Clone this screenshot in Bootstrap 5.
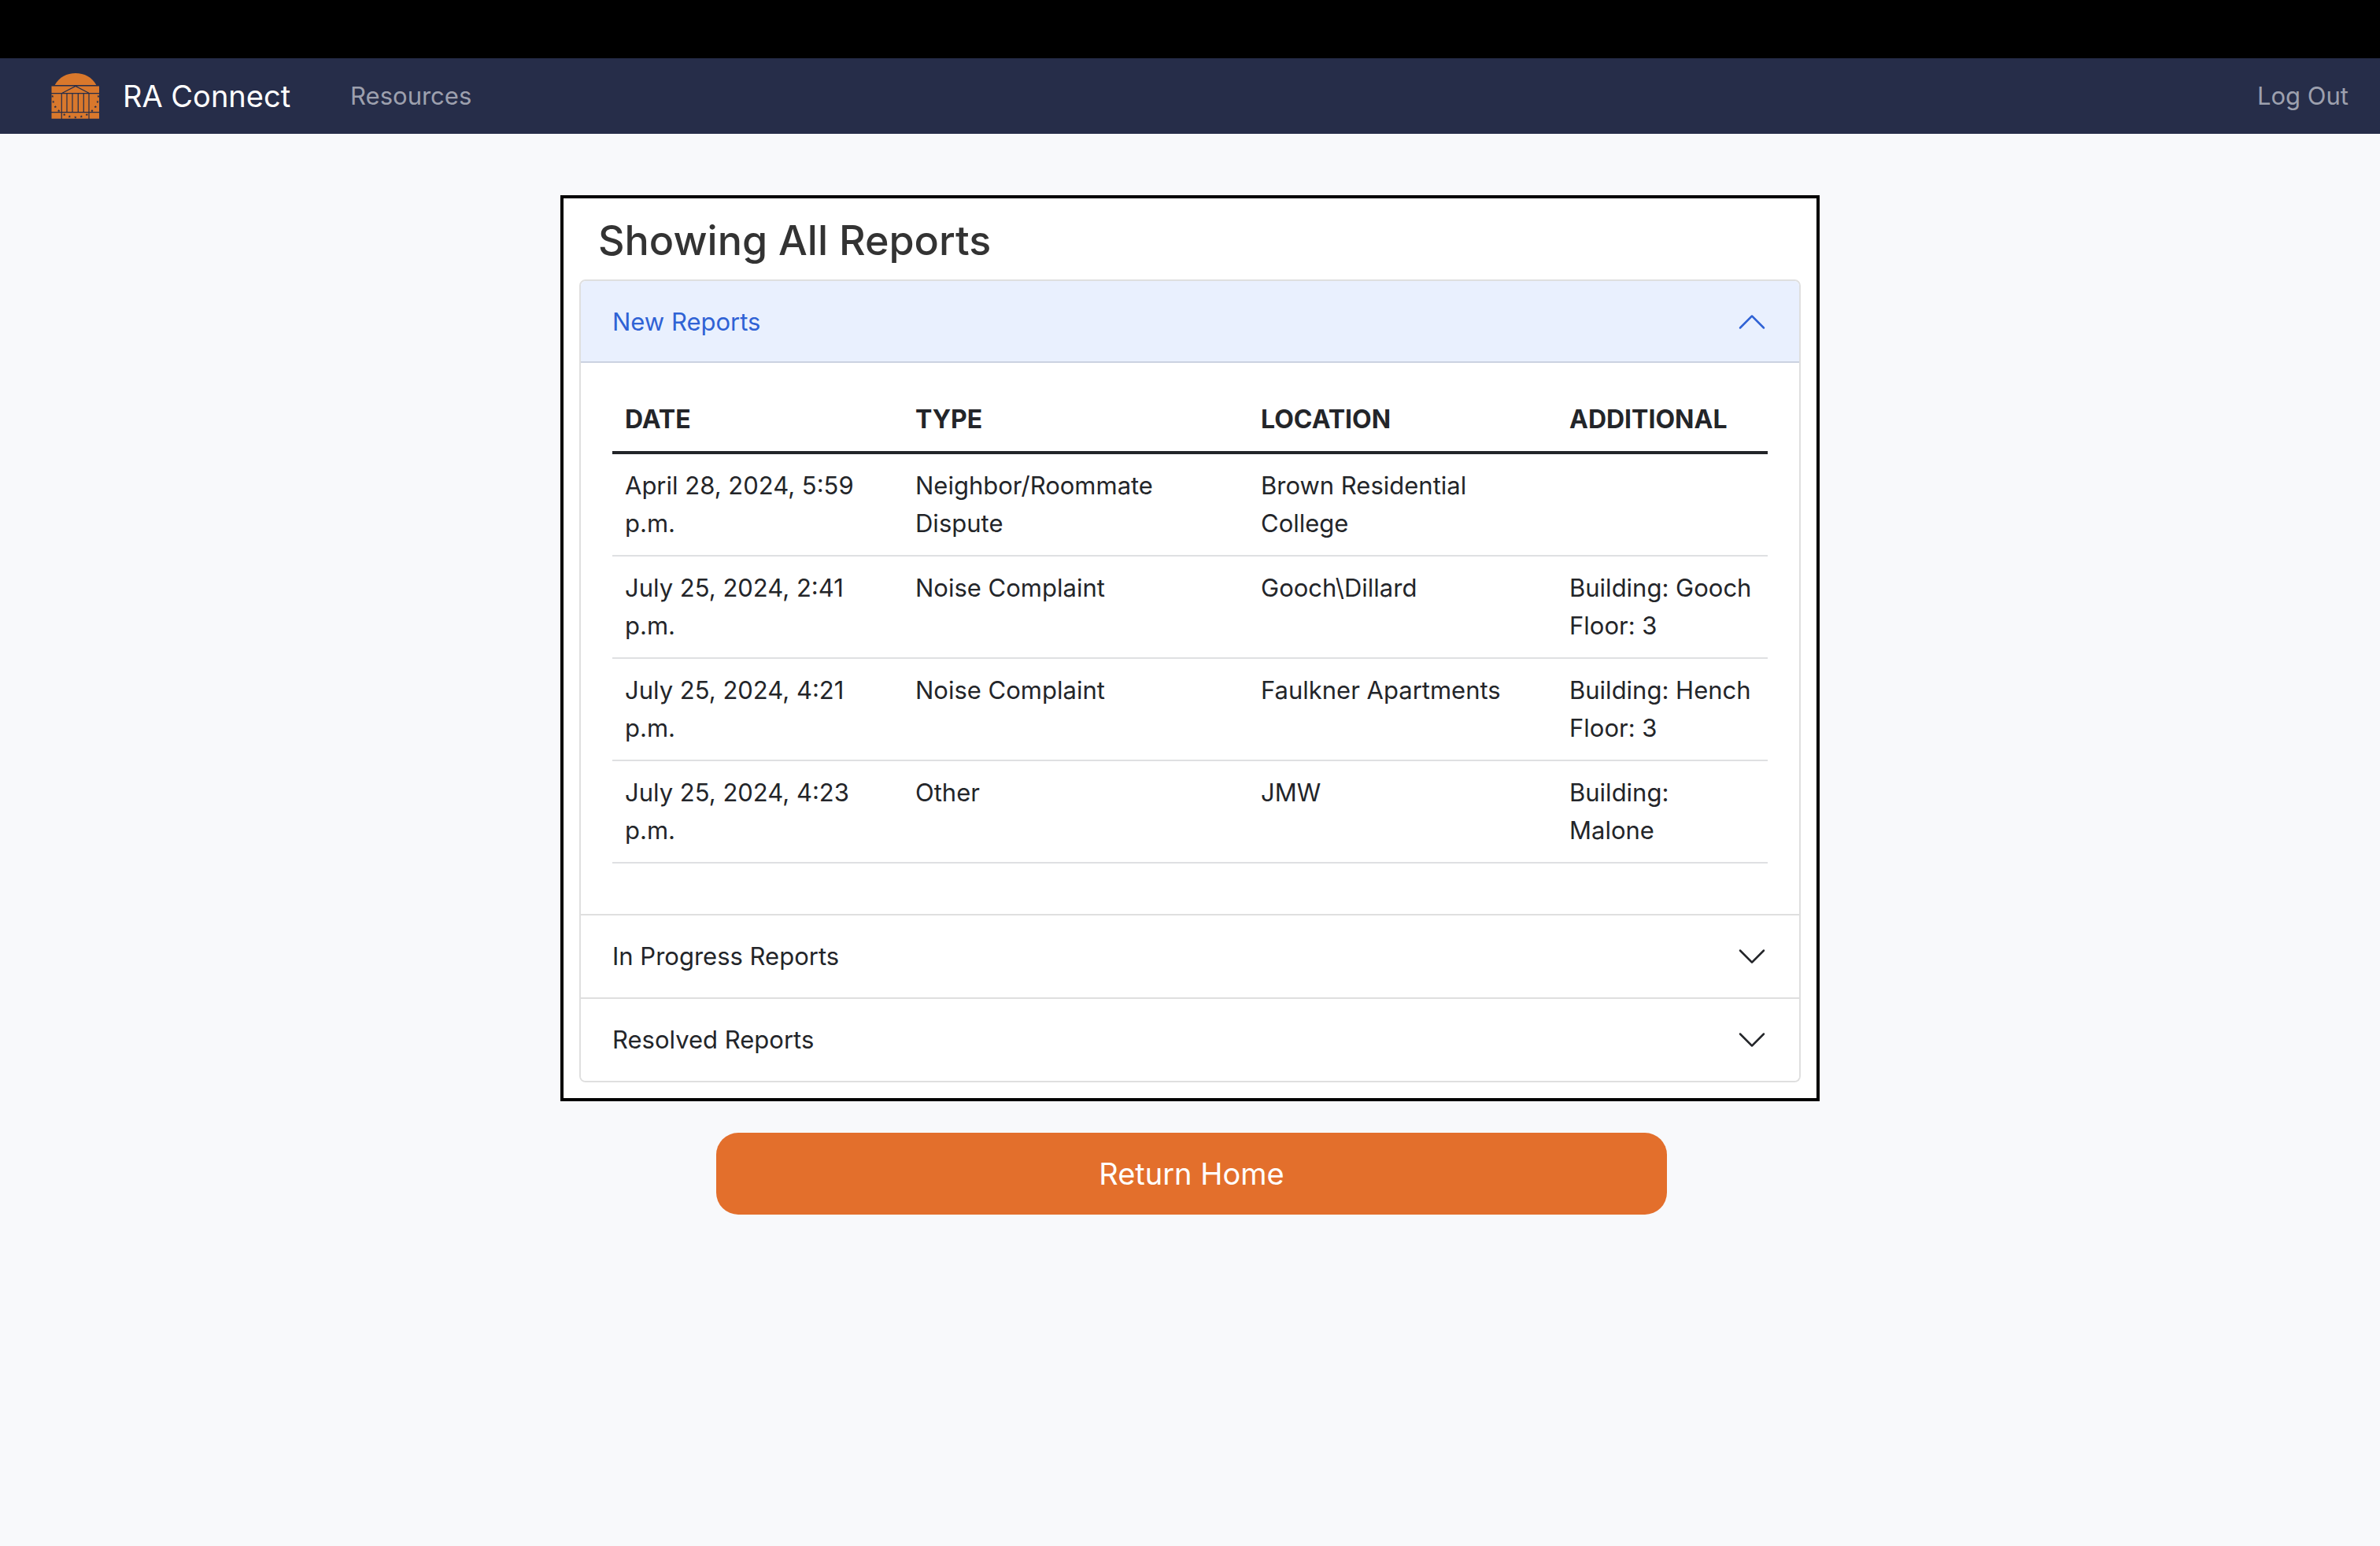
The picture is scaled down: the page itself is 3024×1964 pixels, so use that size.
<!DOCTYPE html>
<html lang="en">
<head>
<meta charset="utf-8">
<meta name="viewport" content="width=device-width, initial-scale=1">
<title>RA Connect</title>
<link href="https://cdn.jsdelivr.net/npm/bootstrap@5.3.0/dist/css/bootstrap.min.css" rel="stylesheet">
<style>
  html { font-size: 32px; }
  body {
    font-family: Inter, "Liberation Sans", sans-serif;
    font-size: 31px;
    line-height: 48px;
    color: #232529;
    background: #f8f9fb;
  }
  .top-strip { height: 74px; }
  .site-nav { background: #262d49; padding: 8px 24px 8px 64px; }
  .site-nav .navbar-brand { font-size: 38px; line-height: 60px; margin-right: 60px; }
  .site-nav .brand-logo { width: 64px; height: 60px; margin-right: 28px; }
  .site-nav .nav-link { color: #9da0ae; padding-left: 16px; padding-right: 16px; }

  .report-panel { width: 1600px; max-width: 100%; margin-top: 78px; padding: 20px; border: 4px solid #000; }
  .report-panel h1 { font-size: 52px; line-height: 67px; color: #333; padding-left: 24px; margin-bottom: 16px; }

  .report-list {
    --bs-accordion-border-width: 2px;
    --bs-accordion-border-color: #dfdfdf;
    --bs-accordion-border-radius: 8px;
    --bs-accordion-inner-border-radius: 6px;
    --bs-accordion-btn-color: #232529;
    --bs-accordion-btn-padding-x: 40px;
    --bs-accordion-body-padding-x: 40px;
    --bs-accordion-active-bg: #e9f0fe;
    --bs-accordion-active-color: #2f62d5;
    --bs-accordion-bg: #fff;
  }
  .report-list .accordion-button { font-size: 31px; line-height: 40px; }
  .report-list .accordion-button::after { display: none; }
  .report-list .accordion-button:not(.collapsed) { box-shadow: inset 0 -2px 0 #cbd2e1; }
  .chevron { width: 40px; height: 40px; }
  .accordion-button:not(.collapsed) .chevron { transform: rotate(180deg); }

  .report-table { --bs-table-color: #232529; --bs-table-bg: transparent; margin-bottom: 32px; border-collapse: separate; border-spacing: 0; }
  .report-table > :not(caption) > * > * { padding: 16px; border-bottom: 2px solid #dfe0e2; }
  .report-table > thead > tr > th { font-size: 32px; border-bottom: 4px solid #232529; }
  .col-date { width: 369px; }
  .col-type { width: 439px; }
  .col-location { width: 392px; }

  .home-row { padding-left: 4px; margin-top: 40px; }
  .btn-home, .btn-home:hover {
    width: 40%;
    padding: 22px;
    font-size: 38px;
    line-height: 60px;
    color: #fff;
    background: #e36f2c;
    border: 0;
    border-radius: 28px;
  }
</style>
</head>
<body>
<div class="top-strip bg-black"></div>
<nav class="navbar navbar-expand site-nav">
  <a class="navbar-brand d-flex align-items-center text-white" href="#">
    <svg class="brand-logo" viewBox="0 0 64 60" aria-hidden="true">
      <g fill="#d9782c">
        <path d="M5.700 16C11 6 21 1 32 1s21 5 26.300 15z"/>
        <path d="M1.500 17H62V58.700H1.500z"/>
      </g>
      <g fill="none" stroke="#262d49" stroke-width="1.200">
        <path d="M1 17H63M1 26.700H62M1 50.700H62M14.300 27V59M49 27V59M15 26.200L32 17.500L49 26.200"/>
        <path d="M21 27V50.700M28 27V50.700M35.300 27V50.700M42.300 27V50.700"/>
      </g>
      <defs>
        <path id="star" d="M0-1.700L.5-.6 1.700-.5 .8.3 1.100 1.500 0 .9-1.100 1.500-.8.3-1.700-.5-.5-.6z"/>
      </defs>
      <g fill="#262d49">
        <use href="#star" x="2.700" y="30.300"/><use href="#star" x="3.700" y="37.300"/><use href="#star" x="6.300" y="43.700"/><use href="#star" x="10.700" y="48.500"/>
        <use href="#star" x="17.700" y="53.500"/><use href="#star" x="24.300" y="56"/><use href="#star" x="31.800" y="57"/><use href="#star" x="39.300" y="56"/><use href="#star" x="46.300" y="53.500"/>
        <use href="#star" x="53" y="48.500"/><use href="#star" x="57.300" y="43.700"/><use href="#star" x="60" y="37.300"/><use href="#star" x="61" y="30.300"/>
      </g>
    </svg>
    RA Connect
  </a>
  <div class="navbar-nav flex-grow-1 justify-content-between">
    <a class="nav-link" href="#">Resources</a>
    <a class="nav-link" href="#">Log Out</a>
  </div>
</nav>

<main>
  <section class="report-panel bg-white mx-auto">
    <h1 class="mt-0">Showing All Reports</h1>
    <div class="accordion report-list" id="reports">
      <div class="accordion-item">
        <h2 class="accordion-header">
          <button class="accordion-button justify-content-between" type="button" data-bs-toggle="collapse" data-bs-target="#newReports" aria-expanded="true" aria-controls="newReports">
            New Reports
            <svg class="chevron" viewBox="0 0 16 16" fill="currentColor" aria-hidden="true"><path fill-rule="evenodd" d="M1.646 4.646a.5.5 0 0 1 .708 0L8 10.293l5.646-5.647a.5.5 0 0 1 .708.708l-6 6a.5.5 0 0 1-.708 0l-6-6a.5.5 0 0 1 0-.708z"/></svg>
          </button>
        </h2>
        <div id="newReports" class="accordion-collapse collapse show">
          <div class="accordion-body">
            <table class="table report-table">
              <thead>
                <tr>
                  <th class="col-date" scope="col">DATE</th>
                  <th class="col-type" scope="col">TYPE</th>
                  <th class="col-location" scope="col">LOCATION</th>
                  <th scope="col">ADDITIONAL</th>
                </tr>
              </thead>
              <tbody>
                <tr><td>April 28, 2024, 5:59 p.m.</td><td>Neighbor/Roommate Dispute</td><td>Brown Residential College</td><td></td></tr>
                <tr><td>July 25, 2024, 2:41 p.m.</td><td>Noise Complaint</td><td>Gooch\Dillard</td><td>Building: Gooch<br>Floor: 3</td></tr>
                <tr><td>July 25, 2024, 4:21 p.m.</td><td>Noise Complaint</td><td>Faulkner Apartments</td><td>Building: Hench<br>Floor: 3</td></tr>
                <tr><td>July 25, 2024, 4:23 p.m.</td><td>Other</td><td>JMW</td><td>Building: Malone</td></tr>
              </tbody>
            </table>
          </div>
        </div>
      </div>
      <div class="accordion-item">
        <h2 class="accordion-header">
          <button class="accordion-button collapsed justify-content-between" type="button" data-bs-toggle="collapse" data-bs-target="#progressReports" aria-expanded="false" aria-controls="progressReports">
            In Progress Reports
            <svg class="chevron" viewBox="0 0 16 16" fill="currentColor" aria-hidden="true"><path fill-rule="evenodd" d="M1.646 4.646a.5.5 0 0 1 .708 0L8 10.293l5.646-5.647a.5.5 0 0 1 .708.708l-6 6a.5.5 0 0 1-.708 0l-6-6a.5.5 0 0 1 0-.708z"/></svg>
          </button>
        </h2>
        <div id="progressReports" class="accordion-collapse collapse"><div class="accordion-body"></div></div>
      </div>
      <div class="accordion-item">
        <h2 class="accordion-header">
          <button class="accordion-button collapsed justify-content-between" type="button" data-bs-toggle="collapse" data-bs-target="#resolvedReports" aria-expanded="false" aria-controls="resolvedReports">
            Resolved Reports
            <svg class="chevron" viewBox="0 0 16 16" fill="currentColor" aria-hidden="true"><path fill-rule="evenodd" d="M1.646 4.646a.5.5 0 0 1 .708 0L8 10.293l5.646-5.647a.5.5 0 0 1 .708.708l-6 6a.5.5 0 0 1-.708 0l-6-6a.5.5 0 0 1 0-.708z"/></svg>
          </button>
        </h2>
        <div id="resolvedReports" class="accordion-collapse collapse"><div class="accordion-body"></div></div>
      </div>
    </div>
  </section>
  <div class="home-row d-flex justify-content-center">
    <button class="btn btn-home" type="button">Return Home</button>
  </div>
</main>
<script src="https://cdn.jsdelivr.net/npm/bootstrap@5.3.0/dist/js/bootstrap.bundle.min.js"></script>
</body>
</html>
